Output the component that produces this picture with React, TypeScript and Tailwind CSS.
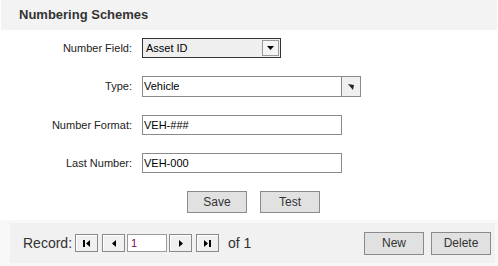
import React from "react";

const Tri = ({ dir }: { dir: "l" | "r" | "d" }) => {
  if (dir === "l")
    return (
      <svg width="4" height="7" viewBox="0 0 4 7">
        <polygon points="4,0 4,7 0,3.5" fill="#000" />
      </svg>
    );
  if (dir === "r")
    return (
      <svg width="4" height="7" viewBox="0 0 4 7">
        <polygon points="0,0 0,7 4,3.5" fill="#000" />
      </svg>
    );
  return (
    <svg width="7" height="4" viewBox="0 0 7 4">
      <polygon points="0,0 7,0 3.5,4" fill="#000" />
    </svg>
  );
};

const NavBtn = ({ children }: { children: React.ReactNode }) => (
  <div className="w-[23px] h-[18px] border border-[#8a8a8a] bg-[#f0f0f0] shadow-[inset_1px_1px_0_#ffffff] flex items-center justify-center gap-[1px]">
    {children}
  </div>
);

const Row = ({ label, children, h = "h-[20px]" }: { label: string; children: React.ReactNode; h?: string }) => (
  <div className={`flex items-center ${h}`}>
    <div className="w-[133px] pr-[1px] text-right text-[11px] text-[#222]">{label}</div>
    <div className="ml-[9px] h-full flex">{children}</div>
  </div>
);

export default function App() {
  return (
    <div
      className="w-[498px] h-[266px] bg-white flex flex-col"
      style={{ fontFamily: '"Liberation Sans", Arial, sans-serif' }}
    >
      <div className="h-[30px] bg-[#f3f3f3] ml-[1px] mr-[1px] flex items-center pl-[18px]">
        <span className="text-[13px] font-bold text-[#333]">Numbering Schemes</span>
      </div>
      <div className="flex flex-col gap-[18px] pt-[8px]">
        <Row label="Number Field:">
          <div className="w-[139px] h-[20px] border border-[#333] bg-[#efefef] flex items-center justify-between">
            <span className="pl-[3px] text-[11px] text-black">Asset ID</span>
            <div className="w-[17px] h-[16px] mr-[1px] border border-[#9a9a9a] bg-[#f4f4f4] flex items-center justify-center">
              <Tri dir="d" />
            </div>
          </div>
        </Row>
        <Row label="Type:" h="h-[21px]">
          <div className="w-[200px] h-[21px] border border-[#8a8a8a] bg-white flex items-center">
            <span className="pl-[1px] text-[11px] text-black">Vehicle</span>
          </div>
          <div className="w-[19px] h-[21px] border border-[#8a8a8a] border-l-0 bg-[#f0f0f0] flex items-center justify-center">
            <svg width="6" height="6" viewBox="0 0 6 6">
              <polygon points="0,0 6,1 5,6" fill="#222" />
            </svg>
          </div>
        </Row>
        <Row label="Number Format:">
          <div className="w-[200px] h-[20px] border border-[#8a8a8a] bg-white flex items-center">
            <span className="pl-[1px] text-[11px] text-black">VEH-###</span>
          </div>
        </Row>
        <Row label="Last Number:">
          <div className="w-[200px] h-[20px] border border-[#8a8a8a] bg-white flex items-center">
            <span className="pl-[1px] text-[11px] text-black">VEH-000</span>
          </div>
        </Row>
        <div className="flex h-[22px] pl-[187px] gap-[13px]">
          <div className="w-[60px] h-[22px] border border-[#8a8a8a] bg-[#e1e1e1] flex items-center justify-center text-[12px] text-[#333]">
            Save
          </div>
          <div className="w-[60px] h-[22px] border border-[#8a8a8a] bg-[#e1e1e1] flex items-center justify-center text-[12px] text-[#333]">
            Test
          </div>
        </div>
      </div>
      <div className="mt-auto h-[46px] bg-[#f8f8f8] pt-[3px] pb-[3px] pl-[10px] pr-[3px] flex">
        <div className="flex-1 bg-[#f1f1f1] flex items-center pl-[13px]">
          <span className="text-[14px] text-[#333]">Record:</span>
          <div className="ml-[3px] flex items-center gap-[4px]">
            <NavBtn>
              <div className="w-[2px] h-[7px] bg-black" />
              <Tri dir="l" />
            </NavBtn>
            <NavBtn>
              <Tri dir="l" />
            </NavBtn>
          </div>
          <div className="ml-[2px] w-[40px] h-[18px] border border-[#9a9a9a] bg-white flex items-center">
            <span className="pl-[3px] text-[11px] text-[#800060]">1</span>
          </div>
          <div className="ml-[2px] flex items-center gap-[4px]">
            <NavBtn>
              <Tri dir="r" />
            </NavBtn>
            <NavBtn>
              <Tri dir="r" />
              <div className="w-[2px] h-[7px] bg-black" />
            </NavBtn>
          </div>
          <span className="ml-[9px] text-[14px] text-[#333]">of 1</span>
          <div className="ml-auto mr-[4px] flex gap-[7px]">
            <div className="w-[60px] h-[23px] border border-[#8a8a8a] bg-[#e1e1e1] flex items-center justify-center text-[12px] text-[#333]">
              New
            </div>
            <div className="w-[60px] h-[23px] border border-[#8a8a8a] bg-[#e1e1e1] flex items-center justify-center text-[12px] text-[#333]">
              Delete
            </div>
          </div>
        </div>
      </div>
    </div>
  );
}
